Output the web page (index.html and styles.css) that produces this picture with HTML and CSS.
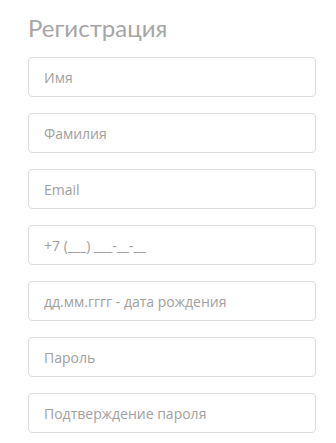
FILE: index.html
```html
<!DOCTYPE html>
<html lang="ru">
<head>
    <meta charset="UTF-8">
    <meta name="viewport" content="width=device-width, initial-scale=1.0">
    <title>Регистрация</title>
    <link rel="stylesheet" href="styles.css">
</head>
<body>
    <form class="register">
        <h2 class="title">Регистрация</h2>
        <input class="field" type="text" placeholder="Имя">
        <input class="field" type="text" placeholder="Фамилия">
        <input class="field" type="email" placeholder="Email">
        <input class="field" type="tel" placeholder="+7 (___) ___-__-__">
        <input class="field" type="text" placeholder="дд.мм.гггг - дата рождения">
        <input class="field" type="password" placeholder="Пароль">
        <input class="field" type="password" placeholder="Подтверждение пароля">
    </form>
</body>
</html>
```

FILE: styles.css
```css
body {
    margin: 0;
    padding: 0;
    background-color: #fff;
    font-family: "Open Sans", Arial, sans-serif;
}

.register {
    display: flex;
    flex-direction: column;
    gap: 16px;
    width: 288px;
    padding: 14px 0 0 28px;
}

.title {
    margin: 0 0 -1px 0;
    font-family: Lato, "Open Sans", sans-serif;
    font-size: 24px;
    font-weight: 400;
    line-height: 28px;
    color: #a6a6a6;
}

.field {
    box-sizing: border-box;
    width: 100%;
    height: 40px;
    padding: 0 15px;
    border: 1px solid #dcdcdc;
    border-radius: 4px;
    font-family: "Open Sans", Arial, sans-serif;
    font-size: 14px;
    color: #555;
    outline: none;
}

.field::placeholder {
    color: #a0a0a0;
}
```
